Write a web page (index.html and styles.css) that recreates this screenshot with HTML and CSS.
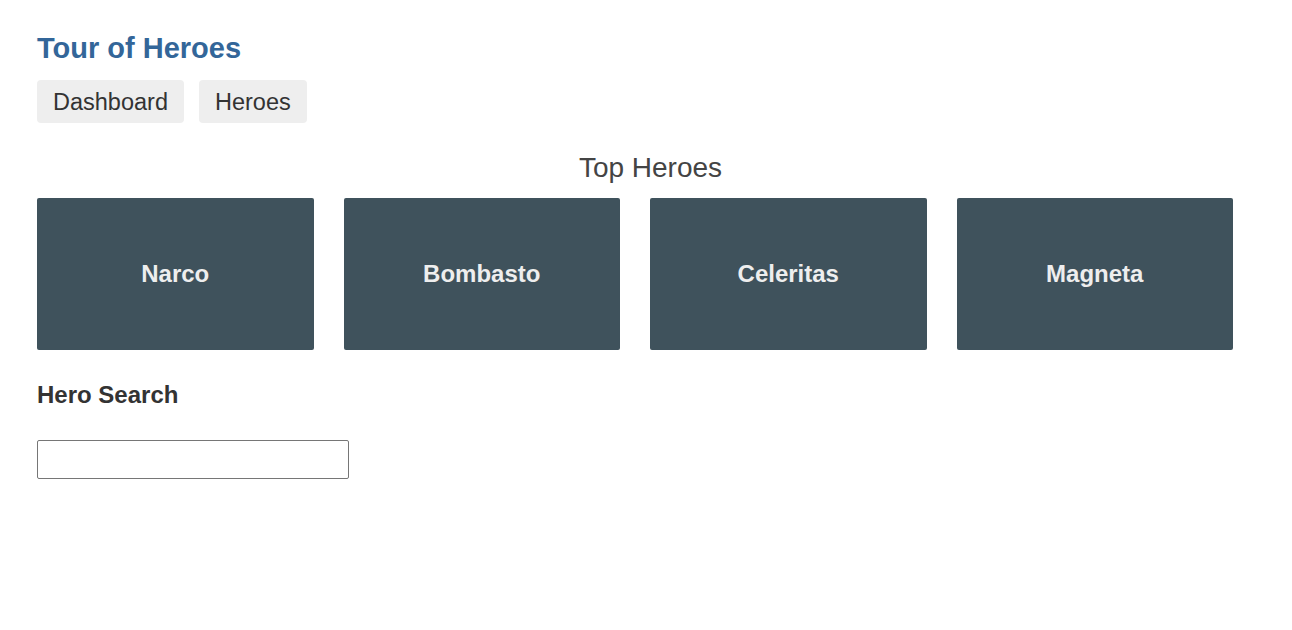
FILE: index.html
```html
<!DOCTYPE html>
<html lang="en">
<head>
<meta charset="utf-8">
<title>Tour of Heroes</title>
<link rel="stylesheet" href="styles.css">
</head>
<body>
<div class="app">
  <h1 class="title">Tour of Heroes</h1>
  <nav class="nav">
    <a class="nav-link" href="#">Dashboard</a>
    <a class="nav-link" href="#">Heroes</a>
  </nav>
  <h2 class="section-title">Top Heroes</h2>
  <div class="heroes-menu">
    <a class="hero-card" href="#">Narco</a>
    <a class="hero-card" href="#">Bombasto</a>
    <a class="hero-card" href="#">Celeritas</a>
    <a class="hero-card" href="#">Magneta</a>
  </div>
  <div class="search">
    <label class="search-label" for="search-box">Hero Search</label>
    <input class="search-box" id="search-box" type="text">
  </div>
</div>
</body>
</html>
```

FILE: styles.css
```css
html, body {
  margin: 0;
  padding: 0;
  background: #fff;
}

body {
  font-family: "Liberation Sans", Arial, Helvetica, sans-serif;
  color: #333;
}

.app {
  width: 1227px;
  padding: 32px 0 0 37px;
}

.title {
  margin: 0;
  font-size: 29px;
  line-height: 33px;
  font-weight: bold;
  color: #336699;
}

.nav {
  display: flex;
  gap: 15px;
  margin-top: 15px;
}

.nav-link {
  display: block;
  padding: 9px 16px 7px;
  font-size: 23.5px;
  line-height: 27px;
  color: #333;
  text-decoration: none;
  background-color: #eee;
  border-radius: 4px;
}

.section-title {
  margin: 29px 0 0;
  font-size: 28px;
  line-height: 32px;
  font-weight: normal;
  color: #444;
  text-align: center;
}

.heroes-menu {
  display: grid;
  grid-template-columns: repeat(4, 1fr);
  gap: 30px;
  width: 1196px;
  margin-top: 14px;
}

.hero-card {
  display: flex;
  align-items: center;
  justify-content: center;
  height: 152px;
  background-color: #3f525c;
  border-radius: 2px;
  color: #eee;
  font-size: 24px;
  font-weight: bold;
  text-decoration: none;
}

.search {
  display: flex;
  flex-direction: column;
  align-items: flex-start;
  margin-top: 31px;
}

.search-label {
  display: block;
  font-size: 24px;
  line-height: 28px;
  font-weight: bold;
  color: #333;
}

.search-box {
  box-sizing: border-box;
  width: 312px;
  height: 39px;
  margin: 31px 0 0;
  padding: 1px 2px;
  border: 1px solid #767676;
  border-radius: 2px;
  font-family: "Liberation Sans", Arial, sans-serif;
  font-size: 16px;
  background: #fff;
}
```
